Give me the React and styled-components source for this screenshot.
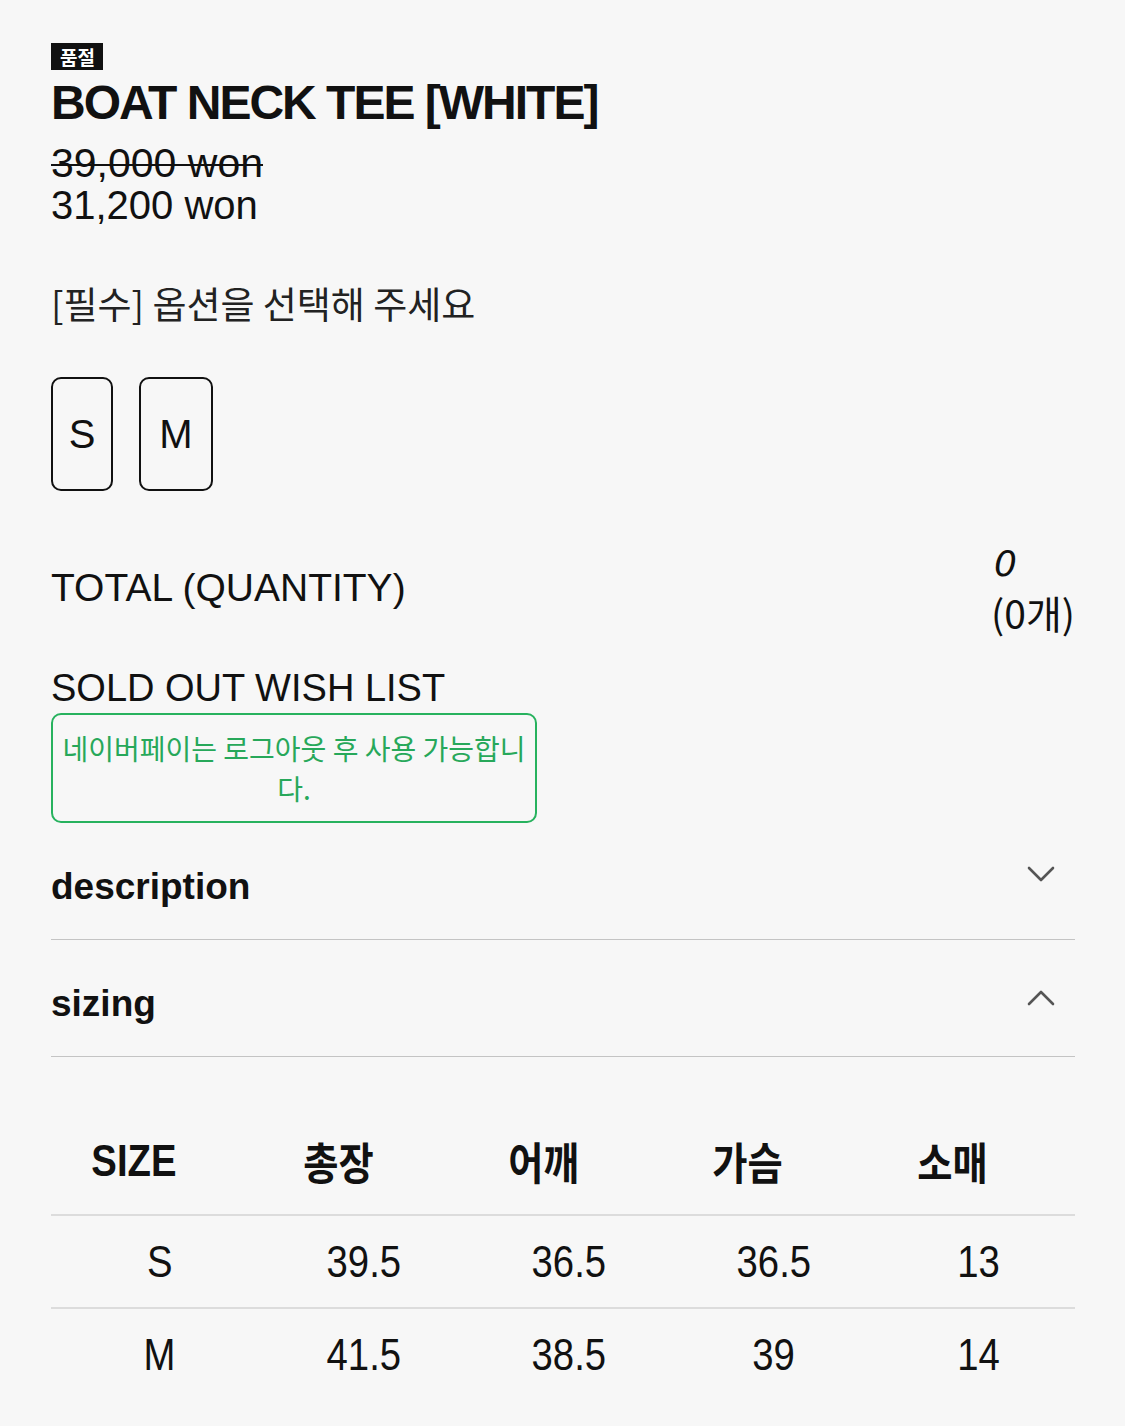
import React, { useState } from 'react'
import styled, { createGlobalStyle } from 'styled-components'

const GlobalStyle = createGlobalStyle`
  html, body {
    margin: 0;
    padding: 0;
    background: #f7f7f7;
  }
  body {
    font-family: "Liberation Sans", Arial, "Noto Sans CJK KR", sans-serif;
    color: #111;
  }
`

const Page = styled.div`
  padding: 43px 50px 40px 51px;
  display: flex;
  flex-direction: column;
`

const Badge = styled.span`
  align-self: flex-start;
  background: #111;
  color: #fff;
  font-family: "Noto Sans CJK KR", sans-serif;
  font-size: 19px;
  font-weight: 700;
  line-height: 27px;
  height: 27px;
  padding: 0 8px 0 9px;
`

const Title = styled.h1`
  margin: 4px 0 0;
  font-size: 48px;
  font-weight: 700;
  letter-spacing: -2px;
  line-height: 58px;
`

const Prices = styled.div`
  margin-top: 10px;
  display: flex;
  flex-direction: column;
`

const Price = styled.div`
  font-size: ${p => (p.$old ? 41 : 40)}px;
  line-height: 42px;
  text-decoration: ${p => (p.$old ? 'line-through' : 'none')};
  text-decoration-thickness: 2px;
  color: #111;
`

const OptionLabel = styled.div`
  margin-top: 55px;
  font-family: "Noto Sans CJK KR", sans-serif;
  font-size: 37px;
  line-height: 44px;
  color: #222;
`

const SizeOptions = styled.div`
  display: flex;
  gap: 26px;
  margin-top: 52px;
`

const SizeButton = styled.button`
  height: 114px;
  min-width: ${p => p.$w}px;
  padding: 0;
  background: transparent;
  border: 2.5px solid #111;
  border-radius: 10px;
  font-family: "Liberation Sans", Arial, sans-serif;
  font-size: 40px;
  color: #111;
  cursor: pointer;
`

const TotalRow = styled.div`
  display: flex;
  align-items: center;
  justify-content: space-between;
  margin-top: 49px;
`

const Label = styled.div`
  font-size: ${p => p.$size || 38}px;
  line-height: 44px;
  color: #111;
`

const TotalValue = styled.div`
  display: flex;
  flex-direction: column;
  line-height: 48px;
  em {
    font-family: "DejaVu Sans", sans-serif;
    font-size: 36px;
    padding-left: 3px;
  }
  span {
    font-family: "Noto Sans CJK KR", sans-serif;
    font-size: 39px;
  }
`

const WishLabel = styled(Label)`
  margin-top: 30px;
`

const NaverNotice = styled.div`
  margin-top: 3px;
  width: 486px;
  box-sizing: border-box;
  border: 2.5px solid #27b25e;
  border-radius: 10px;
  padding: 13px 8px 13px;
  text-align: center;
  font-family: "Noto Sans CJK KR", sans-serif;
  font-size: 28px;
  line-height: 40px;
  color: #27a85a;
`

const AccordionItem = styled.div`
  border-bottom: 1.5px solid #c4c4c4;
`

const AccordionHead = styled.div`
  height: 116px;
  display: flex;
  align-items: center;
  justify-content: space-between;
  cursor: pointer;
`

const AccordionTitle = styled.h3`
  margin: 12px 0 0;
  font-size: 37px;
  font-weight: 700;
  color: #111;
`

const Chevron = styled.svg`
  width: 28px;
  height: 18px;
  margin-right: 20px;
  margin-top: ${p => (p.$up ? '0' : '-14px')};
`

const SizeTable = styled.table`
  width: 100%;
  margin-top: 50px;
  border-collapse: collapse;
  table-layout: fixed;
`

const HeadCell = styled.th`
  height: 107px;
  padding: 0 40px 0 0;
  border-bottom: 2px solid #dcdcdc;
  font-family: "Liberation Sans", Arial, "Noto Sans CJK KR", sans-serif;
  font-size: 44px;
  font-weight: 700;
  color: #111;
  text-align: center;
`

const BodyCell = styled.td`
  height: 91px;
  padding: 0 0 0 12px;
  border-bottom: ${p => (p.$last ? 'none' : '2px solid #dcdcdc')};
  font-size: 44px;
  color: #111;
  text-align: center;
`

const Squeeze = styled.span`
  display: inline-block;
  transform: scaleX(0.87);
`

function Accordion({ title, defaultOpen = false, children }) {
  const [open, setOpen] = useState(defaultOpen)
  return (
    <>
      <AccordionItem>
        <AccordionHead onClick={() => setOpen(o => !o)}>
          <AccordionTitle>{title}</AccordionTitle>
          <Chevron $up={open} viewBox="0 0 28 18" fill="none" stroke="#555" strokeWidth="2.6" strokeLinecap="round" strokeLinejoin="round">
            {open ? <path d="M2 15 L14 3 L26 15" /> : <path d="M2 3 L14 15 L26 3" />}
          </Chevron>
        </AccordionHead>
      </AccordionItem>
      {open && children}
    </>
  )
}

const heads = ['SIZE', '총장', '어깨', '가슴', '소매']
const rows = [
  ['S', '39.5', '36.5', '36.5', '13'],
  ['M', '41.5', '38.5', '39', '14'],
]

export default function App() {
  return (
    <>
      <GlobalStyle />
      <Page>
        <Badge>품절</Badge>
        <Title>BOAT NECK TEE [WHITE]</Title>
        <Prices>
          <Price $old>39,000 won</Price>
          <Price>31,200 won</Price>
        </Prices>

        <OptionLabel>[필수] 옵션을 선택해 주세요</OptionLabel>
        <SizeOptions>
          <SizeButton $w={62}>S</SizeButton>
          <SizeButton $w={74}>M</SizeButton>
        </SizeOptions>

        <TotalRow>
          <Label $size={39}>TOTAL (QUANTITY)</Label>
          <TotalValue>
            <em>0</em>
            <span>(0개)</span>
          </TotalValue>
        </TotalRow>

        <WishLabel>SOLD OUT WISH LIST</WishLabel>
        <NaverNotice>네이버페이는 로그아웃 후 사용 가능합니다.</NaverNotice>

        <Accordion title="description" />
        <Accordion title="sizing" defaultOpen>
          <SizeTable>
            <thead>
              <tr>
                {heads.map(h => (
                  <HeadCell key={h}><Squeeze>{h}</Squeeze></HeadCell>
                ))}
              </tr>
            </thead>
            <tbody>
              {rows.map((r, i) => (
                <tr key={r[0]}>
                  {r.map((c, j) => (
                    <BodyCell key={j} $last={i === rows.length - 1}><Squeeze>{c}</Squeeze></BodyCell>
                  ))}
                </tr>
              ))}
            </tbody>
          </SizeTable>
        </Accordion>
      </Page>
    </>
  )
}
